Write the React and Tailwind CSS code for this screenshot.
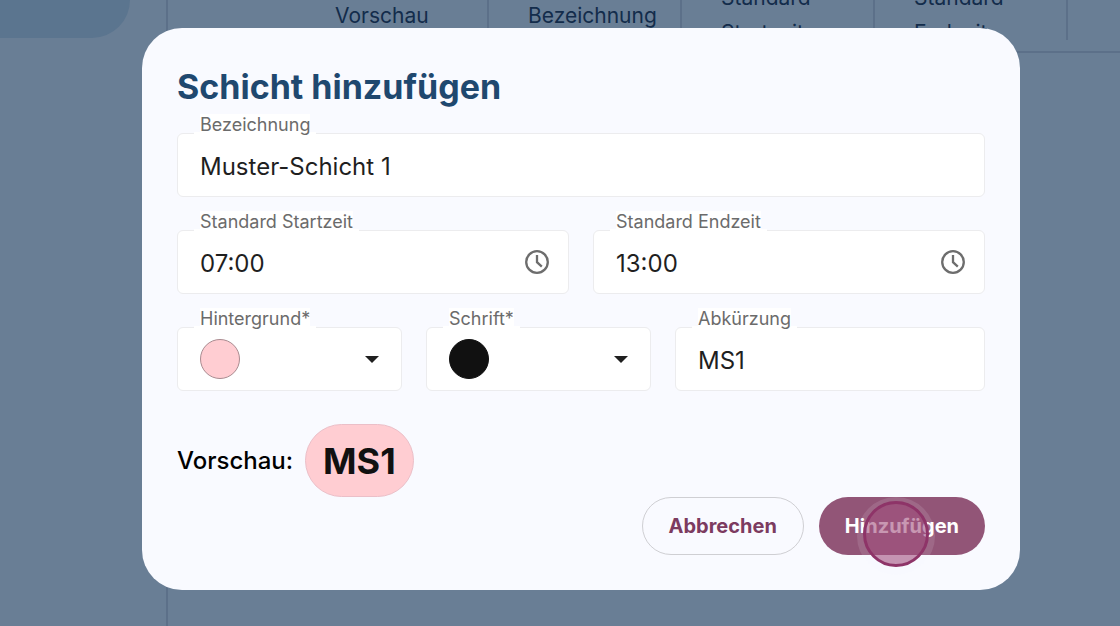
import { useState } from 'react';

const columns = ['Vorschau', 'Bezeichnung', 'Standard Startzeit', 'Standard Endzeit'];

const inputClass = 'h-16 w-full rounded-md border border-[#ececee] bg-white pl-[22px] pt-0.5 text-2xl text-[#1f1f1f] outline-none';

const ClockIcon = () => (
    <svg width="24" height="24" viewBox="0 0 24 24" fill="none" stroke="#6d6d6d" strokeWidth="2.3" aria-hidden="true">
        <circle cx="12" cy="12" r="10.8" />
        <path d="M12 5v7.2l4.8 4.4" />
    </svg>
);

const Field = ({ id, label, className = '', children }) => (
    <div className={`relative ${className}`}>
        {children}
        <label
            htmlFor={id}
            className="absolute -top-[19px] left-[17px] px-1.5 text-lg leading-[22px] text-[#6b6b6b] before:absolute before:inset-x-0 before:bottom-0 before:h-1 before:bg-white"
        >
            <span className="relative block bg-white">{label}</span>
        </label>
    </div>
);

const TimeField = ({ id, label, value, onChange }) => (
    <Field id={id} label={label} className="flex-1">
        <input id={id} type="text" value={value} onChange={(e) => onChange(e.target.value)} className={inputClass} />
        <button type="button" aria-label={`${label} wählen`} className="absolute inset-y-0 right-5 flex items-center">
            <ClockIcon />
        </button>
    </Field>
);

const ColorField = ({ id, label, value, onChange, options, borderClass }) => (
    <Field id={id} label={label} className="flex-[225]">
        <select id={id} value={value} onChange={(e) => onChange(e.target.value)} className={`${inputClass} appearance-none`}>
            {options.map((option) => (
                <option key={option.value} value={option.value} aria-label={option.name} />
            ))}
        </select>
        <div className="pointer-events-none absolute inset-0 flex items-center justify-between px-[23px]">
            <span className={`size-10 rounded-full border ${borderClass}`} style={{ backgroundColor: value }} />
            <svg width="14" height="7" viewBox="0 0 14 7" fill="#1f1f1f" aria-hidden="true">
                <path d="M0 0h14L7 7z" />
            </svg>
        </div>
    </Field>
);

const App = () => {
    const [name, setName] = useState('Muster-Schicht 1');
    const [start, setStart] = useState('07:00');
    const [end, setEnd] = useState('13:00');
    const [background, setBackground] = useState('#ffcdd2');
    const [color, setColor] = useState('#111111');
    const [short, setShort] = useState('MS1');

    return (
        <div className="relative flex min-h-screen overflow-hidden bg-[#697e95] font-['Inter',sans-serif]">
            <aside className="w-[168px] shrink-0 border-r-2 border-[#5c7089]">
                <div className="mr-9 h-[38px] rounded-br-[38px] bg-[#5b758f]" />
            </aside>

            <main className="h-[53px] flex-1 overflow-hidden border-b-2 border-[#5c7089]">
                <table className="-mt-5 ml-32 w-[772px] table-fixed border-collapse text-left text-[21px] leading-[35px] text-[#132c4b]">
                    <thead>
                        <tr>
                            {columns.map((column) => (
                                <th
                                    key={column}
                                    className="relative pl-[39px] pr-5 font-normal after:absolute after:right-0 after:top-0 after:bottom-2.5 after:w-0.5 after:bg-[#5c7089]"
                                >
                                    {column}
                                </th>
                            ))}
                        </tr>
                    </thead>
                </table>
            </main>

            {/* Dialog */}
            <div className="absolute inset-0 flex items-start pl-[142px] pr-[100px] pt-7">
                <form
                    role="dialog"
                    aria-labelledby="dialog-title"
                    onSubmit={(e) => e.preventDefault()}
                    className="w-full rounded-[40px] bg-[#f9faff] p-[35px]"
                >
                    <h1 id="dialog-title" className="text-[34px] font-bold leading-[48px] text-[#1f486f]">
                        Schicht hinzufügen
                    </h1>

                    <div className="mt-[22px] space-y-[33px]">
                        <Field id="name" label="Bezeichnung">
                            <input id="name" type="text" value={name} onChange={(e) => setName(e.target.value)} className={inputClass} />
                        </Field>

                        <div className="flex gap-6">
                            <TimeField id="start" label="Standard Startzeit" value={start} onChange={setStart} />
                            <TimeField id="end" label="Standard Endzeit" value={end} onChange={setEnd} />
                        </div>

                        <div className="flex gap-6">
                            <ColorField
                                id="background"
                                label="Hintergrund*"
                                value={background}
                                onChange={setBackground}
                                options={[{ name: 'Rosa', value: '#ffcdd2' }, { name: 'Blau', value: '#bbdefb' }]}
                                borderClass="border-[#a98b90]"
                            />
                            <ColorField
                                id="color"
                                label="Schrift*"
                                value={color}
                                onChange={setColor}
                                options={[{ name: 'Schwarz', value: '#111111' }, { name: 'Weiß', value: '#ffffff' }]}
                                borderClass="border-[#111111]"
                            />
                            <Field id="short" label="Abkürzung" className="flex-[310]">
                                <input id="short" type="text" value={short} onChange={(e) => setShort(e.target.value)} className={inputClass} />
                            </Field>
                        </div>
                    </div>

                    <div className="mt-[33px] flex items-center gap-3">
                        <span className="text-2xl font-medium text-black">Vorschau:</span>
                        <span
                            className="flex h-[73px] items-center rounded-full border border-[#ebbfc8] px-[17px] text-4xl font-bold"
                            style={{ backgroundColor: background, color }}
                        >
                            {short}
                        </span>
                    </div>

                    <div className="flex justify-end gap-[15px] text-xl font-bold">
                        <button type="button" className="h-[58px] rounded-full border border-[#cfcfd3] px-[26px] text-[#7c3b60]">
                            Abbrechen
                        </button>
                        <button type="submit" className="relative h-[58px] rounded-full bg-[#925577] px-[26px] text-white">
                            Hinzufügen
                            <span className="absolute left-[38px] top-0 size-[78px] rounded-full bg-[#f9faff]/12" />
                            <span className="absolute left-11 top-1 size-[66px] rounded-full border-[3px] border-[#8e3468] bg-[#9b4173]/55" />
                        </button>
                    </div>
                </form>
            </div>
        </div>
    );
};

export default App;
